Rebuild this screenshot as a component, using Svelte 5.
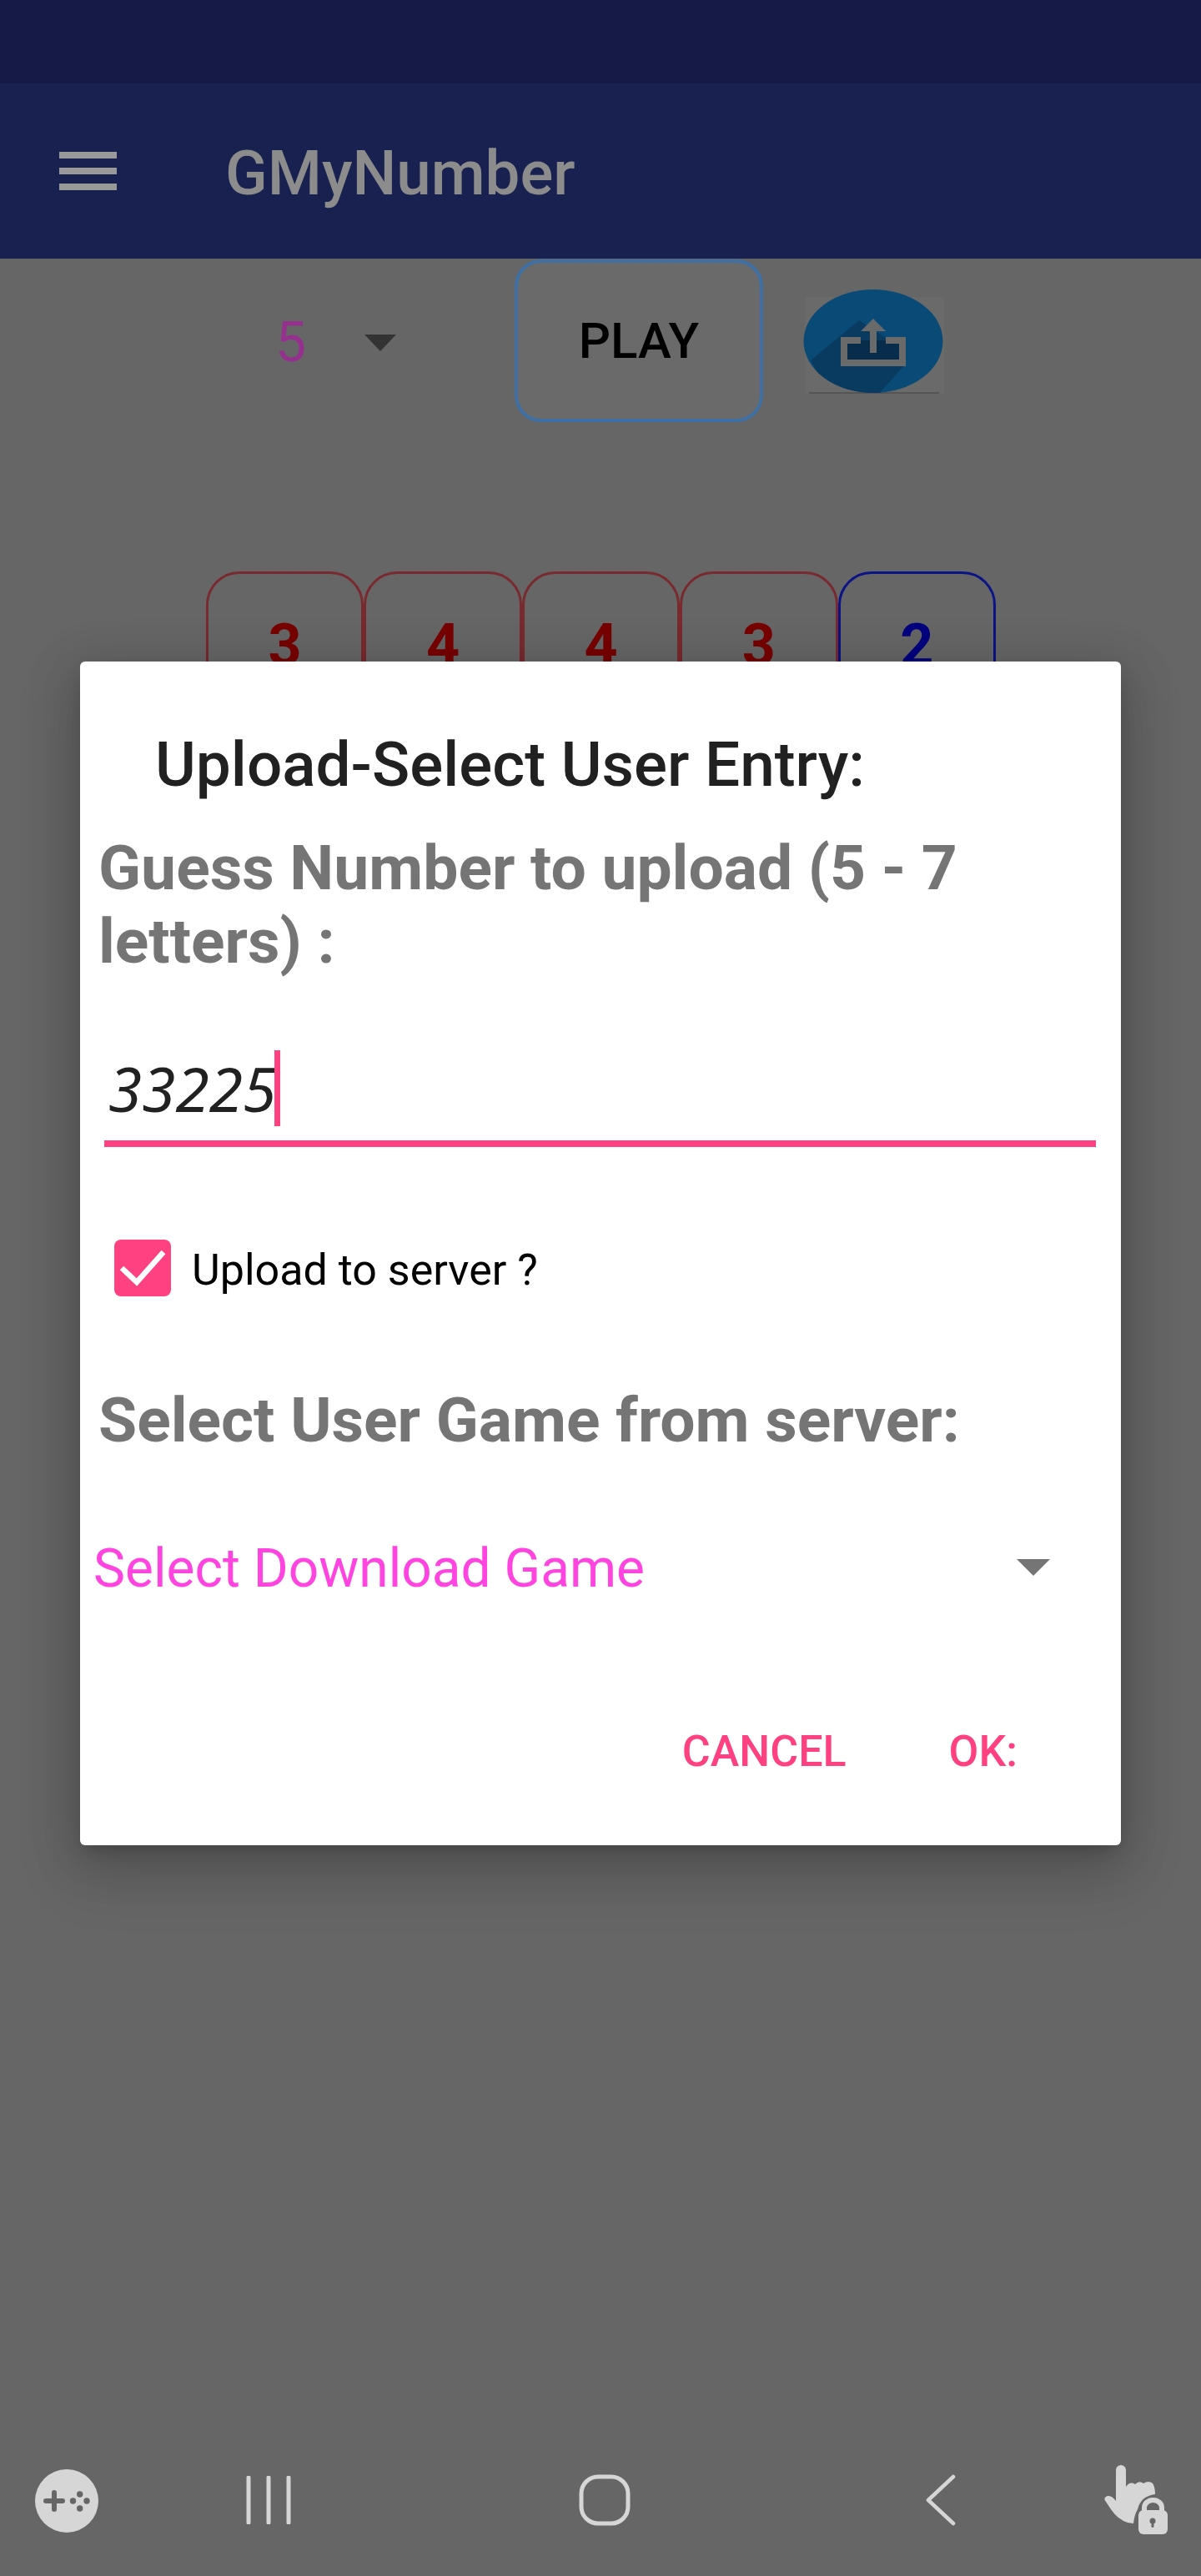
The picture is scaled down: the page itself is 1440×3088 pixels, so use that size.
<script>
	const tiles = [
		{ value: 3, tone: 'red' },
		{ value: 4, tone: 'red' },
		{ value: 4, tone: 'red' },
		{ value: 3, tone: 'red' },
		{ value: 2, tone: 'blue' }
	];
</script>

<div class="screen">
	<div class="status-bar"></div>

	<header class="app-bar">
		<div class="menu-icon"><span></span><span></span><span></span></div>
		<h1>GMyNumber</h1>
	</header>

	<div class="controls">
		<div class="spinner">
			<span class="spinner-value">5</span>
			<span class="arrow dark"></span>
		</div>
		<div class="play">PLAY</div>
		<svg class="upload" viewBox="60 42 176 134" aria-hidden="true">
			<defs>
				<clipPath id="disc"><ellipse cx="147" cy="107" rx="83.5" ry="62" /></clipPath>
			</defs>
			<rect x="65" y="54" width="167" height="115" fill="#6a6a6a" />
			<rect x="70" y="168" width="156" height="2" fill="#555" />
			<ellipse cx="147" cy="107" rx="83.5" ry="62" fill="#0a4a76" />
			<polygon clip-path="url(#disc)" points="130,82 72,130 100,180 145,180 185,135 165,105" fill="#093b60" />
			<rect x="112" y="106" width="70" height="27" fill="#072c4c" />
			<path d="M132 106H112V133H182V106H162" fill="none" stroke="#6a6a6a" stroke-width="8" />
			<path d="M147 121V92" fill="none" stroke="#6a6a6a" stroke-width="8" />
			<polygon points="147,80 162,95 132,95" fill="#6a6a6a" />
		</svg>
	</div>

	<div class="tiles">
		{#each tiles as tile}
			<div class="tile {tile.tone}">{tile.value}</div>
		{/each}
	</div>

	<nav class="nav-bar">
		<div class="nav-slot game">
			<svg width="76" height="76" viewBox="0 0 76 76" aria-hidden="true">
				<circle cx="38" cy="38" r="38" fill="#d6d6d6" />
				<path d="M13 38H33M23 28V48" stroke="#666" stroke-width="6" stroke-linecap="round" />
				<circle cx="45.500" cy="38" r="3.700" fill="#666" />
				<circle cx="53.700" cy="30" r="3.700" fill="#666" />
				<circle cx="62" cy="38" r="3.700" fill="#666" />
				<circle cx="53.700" cy="47" r="3.700" fill="#666" />
			</svg>
		</div>
		<div class="nav-slot">
			<svg width="56" height="58" viewBox="0 0 56 58" aria-hidden="true">
				<path d="M4 2V56M28 2V56M52 2V56" stroke="#d6d6d6" stroke-width="5" stroke-linecap="round" />
			</svg>
		</div>
		<div class="nav-slot">
			<svg width="62" height="62" viewBox="0 0 62 62" aria-hidden="true">
				<rect x="3" y="3" width="56" height="56" rx="20" fill="none" stroke="#d6d6d6" stroke-width="5" />
			</svg>
		</div>
		<div class="nav-slot">
			<svg width="38" height="62" viewBox="0 0 38 62" aria-hidden="true">
				<path d="M34 3L4 31L34 59" fill="none" stroke="#d6d6d6" stroke-width="4.500" stroke-linecap="round" stroke-linejoin="round" />
			</svg>
		</div>
		<div class="nav-slot hand">
			<svg width="78" height="86" viewBox="44 24 78 86" aria-hidden="true">
				<path d="M58 31a6 6 0 0 1 12 0V51q5-7 11-3q5-5 10-1q6-4 11 0q3 4 3 13Q88 62 84 78Q80 85 79 95L72 94Q60 90 52 78L46 69Q42 64 48 62Q53 61 58 68Z" fill="#d6d6d6" />
				<path d="M92 80V76a10.500 9 0 0 1 21 0V80" fill="none" stroke="#d6d6d6" stroke-width="6" />
				<rect x="85" y="79" width="35" height="29" rx="6" fill="#d6d6d6" />
				<circle cx="102" cy="92" r="3.500" fill="#666" />
				<rect x="100.500" y="92" width="3" height="8" rx="1.500" fill="#666" />
			</svg>
		</div>
	</nav>

	<div class="dialog" role="dialog">
		<h2>Upload-Select User Entry:</h2>
		<p class="label first">Guess Number to upload (5 - 7 letters) :</p>

		<div class="field">
			<span class="field-text">33225</span><span class="caret"></span>
		</div>

		<div class="check-row">
			<span class="checkbox">
				<svg width="68" height="68" viewBox="0 0 68 68" aria-hidden="true">
					<path d="M9 34L27 51L59 15" fill="none" stroke="#fff" stroke-width="6.500" />
				</svg>
			</span>
			<span class="check-label">Upload to server ?</span>
		</div>

		<p class="label second">Select User Game from server:</p>

		<div class="download">
			<span>Select Download Game</span>
			<span class="arrow gray"></span>
		</div>

		<div class="actions">
			<span class="cancel">CANCEL</span>
			<span class="ok">OK:</span>
		</div>
	</div>
</div>

<style>
	:global(body) {
		margin: 0;
		background: #666;
	}

	.screen {
		position: relative;
		display: flex;
		flex-direction: column;
		width: 1440px;
		height: 3088px;
		overflow: hidden;
		background: #666;
		font-family: Roboto, sans-serif;
	}

	.status-bar {
		height: 100px;
		background: #151b45;
	}

	.app-bar {
		display: flex;
		align-items: center;
		height: 210px;
		padding-left: 71px;
		box-sizing: border-box;
		background: #18214f;
	}

	.menu-icon {
		display: flex;
		flex-direction: column;
		gap: 11px;
		width: 69px;
	}

	.menu-icon span {
		height: 8px;
		background: #999;
	}

	h1 {
		margin: 6px 0 0 130px;
		color: #8c8c8c;
		font-size: 74.500px;
		font-weight: 500;
		line-height: 1;
	}

	.controls {
		display: flex;
		align-items: flex-start;
		height: 193px;
		padding-top: 1px;
		padding-left: 330px;
		box-sizing: border-box;
	}

	.spinner {
		display: flex;
		align-items: center;
		gap: 70px;
		height: 195px;
		width: 287px;
		padding-top: 5px;
		box-sizing: border-box;
	}

	.spinner-value {
		color: #96308f;
		font-size: 66px;
		line-height: 1;
	}

	.arrow {
		width: 0;
		height: 0;
		border-left: 20px solid transparent;
		border-right: 20px solid transparent;
	}

	.arrow.dark {
		border-left-width: 19px;
		border-right-width: 19px;
		border-top: 20px solid #333;
	}

	.arrow.gray {
		border-top: 20px solid #757575;
	}

	.play {
		display: flex;
		flex-shrink: 0;
		align-items: center;
		justify-content: center;
		width: 298px;
		height: 195px;
		box-sizing: border-box;
		border: 4px solid #3f70a5;
		border-radius: 32px;
		background: #6a6a6a;
		color: #000;
		font-size: 60px;
		font-weight: 500;
	}

	.upload {
		flex-shrink: 0;
		width: 176px;
		height: 134px;
		margin: 33px 0 0 45px;
	}

	.tiles {
		display: flex;
		margin: 182px 0 0 247px;
	}

	.tile {
		display: flex;
		align-items: center;
		justify-content: center;
		width: 189.400px;
		height: 176px;
		box-sizing: border-box;
		border: 3.500px solid;
		border-radius: 40px;
		font-size: 70px;
		font-weight: 700;
		line-height: 1;
	}

	.tile.red {
		border-color: #782a2e;
		color: #780000;
	}

	.tile.blue {
		border-color: #0a1486;
		color: #000080;
	}

	.nav-bar {
		display: grid;
		grid-template-columns: 120px repeat(3, 403px) 111px;
		align-items: center;
		margin-top: auto;
		height: 188px;
		padding-top: 5px;
		box-sizing: border-box;
	}

	.nav-slot {
		display: flex;
		justify-content: center;
	}

	.nav-slot.game {
		justify-content: flex-start;
		padding: 3px 0 0 42px;
	}

	.nav-slot.hand {
		justify-content: flex-start;
		margin-left: -5px;
	}

	.nav-slot svg {
		display: block;
	}

	/* sits over the page, like the android alert it copies */
	.dialog {
		position: absolute;
		top: 793px;
		left: 96px;
		width: 1248px;
		height: 1419px;
		box-sizing: border-box;
		padding: 0 30px 0 24px;
		border-radius: 6px;
		background: #fff;
		box-shadow: 0 30px 70px 10px rgba(0, 0, 0, 0.14), 0 10px 60px 10px rgba(0, 0, 0, 0.1), 0 10px 20px -6px rgba(0, 0, 0, 0.2);
	}

	h2 {
		margin: 0;
		padding: 82px 0 0 66px;
		color: #212121;
		font-size: 74.700px;
		font-weight: 500;
		line-height: 84px;
	}

	.label {
		margin: 0 0 0 -2px;
		color: #757575;
		font-size: 75px;
		font-weight: 700;
		line-height: 88px;
	}

	.label.first {
		margin-top: 37px;
	}

	.label.second {
		margin-top: 104px;
	}

	.field {
		display: flex;
		align-items: flex-end;
		height: 118px;
		margin: 60px 0 0 5px;
		padding: 0 0 17px 5px;
		border-bottom: 8px solid #ff4081;
		box-sizing: content-box;
	}

	.field-text {
		color: #212121;
		font-family: 'Noto Sans', sans-serif;
		font-size: 73px;
		font-style: italic;
		line-height: 91px;
	}

	.caret {
		width: 7px;
		height: 91px;
		margin-left: -2px;
		background: #ff4081;
	}

	.check-row {
		display: flex;
		align-items: center;
		gap: 25px;
		margin: 111px 0 0 17px;
	}

	.checkbox {
		display: block;
		width: 68px;
		height: 68px;
		border-radius: 8px;
		background: #ff4081;
	}

	.checkbox svg {
		display: block;
	}

	.check-label {
		padding-top: 4px;
		color: #000;
		font-size: 52px;
	}

	.download {
		display: flex;
		align-items: center;
		justify-content: space-between;
		height: 90px;
		margin: 86px 0 0 -8px;
		padding: 3px 55px 0 0;
		color: #ff44e0;
		font-size: 64px;
	}

	.arrow.gray {
		margin-top: -3px;
	}

	.actions {
		display: flex;
		justify-content: flex-end;
		gap: 123px;
		margin-top: 145px;
		padding-right: 94px;
		color: #ff4081;
		font-size: 52px;
		font-weight: 500;
		line-height: 60px;
	}
</style>
